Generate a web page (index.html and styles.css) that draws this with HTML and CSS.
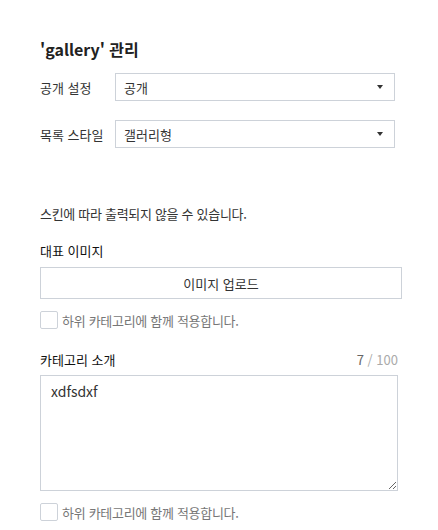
FILE: index.html
```html
<!DOCTYPE html>
<html lang="ko">
<head>
    <meta charset="UTF-8">
    <meta name="viewport" content="width=device-width, initial-scale=1.0">
    <title>'gallery' 관리</title>
    <link rel="stylesheet" href="styles.css">
</head>
<body>
    <div class="panel">
        <h3 class="title">'gallery' 관리</h3>

        <div class="field-row first">
            <label class="field-label">공개 설정</label>
            <div class="select-box">
                <span>공개</span>
                <i class="caret"></i>
            </div>
        </div>
        <div class="field-row">
            <label class="field-label">목록 스타일</label>
            <div class="select-box">
                <span>갤러리형</span>
                <i class="caret"></i>
            </div>
        </div>

        <p class="notice">스킨에 따라 출력되지 않을 수 있습니다.</p>

        <div class="section-label">대표 이미지</div>
        <button class="upload-btn" type="button">이미지 업로드</button>
        <label class="check-row">
            <span class="check-box"></span>
            <span>하위 카테고리에 함께 적용합니다.</span>
        </label>

        <div class="section-head">
            <span class="section-label">카테고리 소개</span>
            <span class="counter"><em>7</em> / 100</span>
        </div>
        <textarea class="intro">xdfsdxf</textarea>
        <label class="check-row">
            <span class="check-box"></span>
            <span>하위 카테고리에 함께 적용합니다.</span>
        </label>
    </div>
</body>
</html>
```

FILE: styles.css
```css
body {
    margin: 0;
    background-color: #fff;
    font-family: "Noto Sans CJK KR", "Noto Sans", sans-serif;
    color: #333;
}
.panel {
    width: 362px;
    padding: 38px 0 0 40px;
}
.title {
    margin: 0;
    font-size: 16px;
    line-height: 22px;
    font-weight: 700;
    color: #222;
}
.field-row {
    display: flex;
    align-items: center;
    margin-top: 19px;
}
.field-row.first {
    margin-top: 13px;
}
.field-label {
    width: 75px;
    font-size: 13px;
    color: #333;
}
.select-box {
    box-sizing: border-box;
    width: 280px;
    height: 28px;
    display: flex;
    align-items: center;
    justify-content: space-between;
    padding: 0 11px 0 8px;
    border: 1px solid #cdd2d9;
    font-size: 13px;
    color: #333;
}
.caret {
    width: 0;
    height: 0;
    border-left: 3.5px solid transparent;
    border-right: 3.5px solid transparent;
    border-top: 4px solid #333;
}
.notice {
    margin: 55px 0 0;
    font-size: 13px;
    line-height: 21px;
    letter-spacing: -0.3px;
    color: #333;
}
.section-label {
    margin-top: 16px;
    font-size: 13px;
    line-height: 21px;
    font-weight: 400;
    color: #111;
}
.upload-btn {
    display: block;
    box-sizing: border-box;
    width: 362px;
    height: 32px;
    margin-top: 6px;
    background: #fff;
    border: 1px solid #cdd2d9;
    font-family: inherit;
    font-size: 13px;
    color: #333;
}
.check-row {
    display: flex;
    align-items: center;
    height: 18px;
    margin-top: 12px;
    font-size: 13px;
    letter-spacing: -0.3px;
    color: #777;
}
.check-box {
    box-sizing: border-box;
    width: 18px;
    height: 18px;
    margin-right: 4px;
    border: 1px solid #cdd2d9;
    border-radius: 2px;
}
.section-head {
    display: flex;
    justify-content: space-between;
    align-items: center;
    width: 358px;
    margin-top: 20px;
}
.section-head .section-label {
    margin-top: 0;
}
.counter {
    font-size: 13px;
    line-height: 21px;
    color: #aaa;
}
.counter em {
    font-style: normal;
    color: #666;
}
.intro {
    display: block;
    box-sizing: border-box;
    width: 358px;
    height: 116px;
    margin: 5px 0 0;
    padding: 4px 10px;
    border: 1px solid #cdd2d9;
    font-family: inherit;
    font-size: 14px;
    line-height: 22px;
    color: #333;
    resize: both;
}
```
